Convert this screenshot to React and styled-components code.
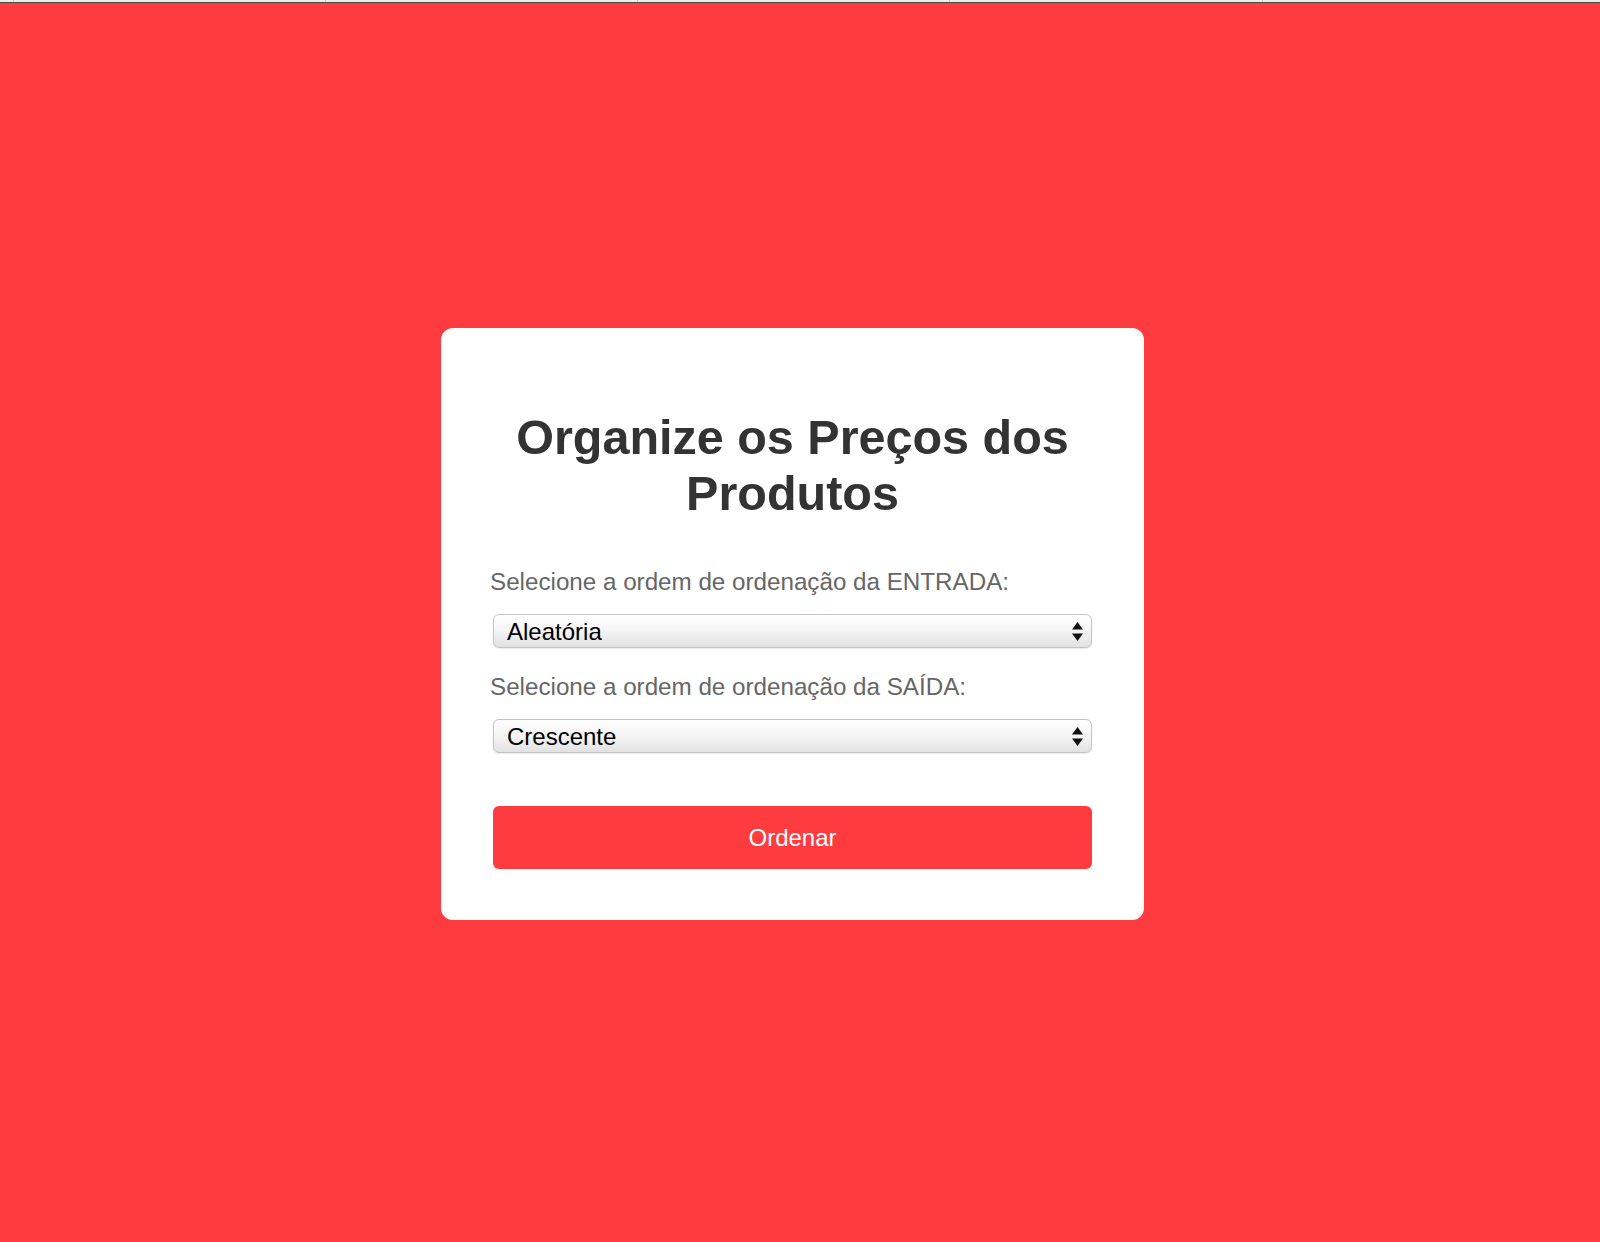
import React from "react";
import styled, { createGlobalStyle } from "styled-components";

const RED = "#fe3c40";

const Global = createGlobalStyle`
  html, body { margin: 0; padding: 0; }
  body {
    background: ${RED};
    font-family: "Liberation Sans", Arial, Helvetica, sans-serif;
  }
  * { box-sizing: border-box; }
`;

const TabStrip = styled.div`
  display: flex;
  height: 3px;
  background: #ececec;
  border-bottom: 1px solid #4a4a4a;
`;

const TabCell = styled.div`
  flex: 0 0 ${(p) => p.$w}px;
  border-left: ${(p) => (p.$first ? "none" : "1px solid #c9c9c9")};
`;

const Stage = styled.main`
  display: flex;
  justify-content: center;
  align-items: flex-start;
  min-height: 1239px;
  padding: 325px 15px 0 0;
`;

const Card = styled.section`
  width: 703px;
  background: #ffffff;
  border-radius: 12px;
  padding: 81px 48px 51px;
  display: flex;
  flex-direction: column;
`;

const Title = styled.h1`
  margin: 0 0 47px;
  font-size: 48.5px;
  line-height: 56px;
  font-weight: 700;
  color: #333333;
  text-align: center;
`;

const Label = styled.label`
  display: block;
  font-size: 24.2px;
  line-height: 28px;
  color: #666666;
  margin: 0 0 18px 1px;
`;

const SelectWrap = styled.div`
  position: relative;
  margin: 0 4px ${(p) => p.$mb}px 4px;
  height: 34px;
`;

const NativeSelect = styled.select`
  appearance: none;
  -webkit-appearance: none;
  width: 100%;
  height: 34px;
  margin: 0;
  padding: 0 40px 0 13px;
  border: 1px solid #c4c4c4;
  border-radius: 6px;
  background: linear-gradient(to bottom, #ffffff 0%, #f6f6f6 45%, #e2e2e2 100%);
  box-shadow: inset 0 1px 0 #ffffff, 0 1px 1px rgba(0, 0, 0, 0.08);
  font-family: "Liberation Sans", Arial, Helvetica, sans-serif;
  font-size: 24px;
  color: #000000;
  outline: none;
`;

const Arrows = styled.svg`
  position: absolute;
  right: 9px;
  top: 8px;
  width: 11px;
  height: 19px;
  pointer-events: none;
`;

const Button = styled.button`
  margin: 0 4px;
  height: 63px;
  border: none;
  border-radius: 6px;
  background: ${RED};
  color: #ffffff;
  font-family: "Liberation Sans", Arial, Helvetica, sans-serif;
  font-size: 24px;
  cursor: pointer;
`;

const Spacer = styled.div`
  height: ${(p) => p.$h}px;
`;

function SelectField({ id, label, options, value, mb }) {
  return (
    <>
      <Label htmlFor={id}>{label}</Label>
      <SelectWrap $mb={mb}>
        <NativeSelect id={id} defaultValue={value}>
          {options.map((o) => (
            <option key={o} value={o}>
              {o}
            </option>
          ))}
        </NativeSelect>
        <Arrows viewBox="0 0 11 19">
          <polygon points="5.5,0 11,7.5 0,7.5" fill="#111" />
          <polygon points="0,11.5 11,11.5 5.5,19" fill="#111" />
        </Arrows>
      </SelectWrap>
    </>
  );
}

export default function App() {
  const tabs = [13, 312, 312, 312, 313, 338];
  return (
    <>
      <Global />
      <TabStrip>
        {tabs.map((w, i) => (
          <TabCell key={i} $w={w} $first={i === 0} />
        ))}
      </TabStrip>
      <Stage>
        <Card>
          <Title>
            Organize os Preços dos
            <br />
            Produtos
          </Title>
          <SelectField
            id="entrada"
            label="Selecione a ordem de ordenação da ENTRADA:"
            options={["Aleatória", "Crescente", "Decrescente"]}
            value="Aleatória"
            mb={25}
          />
          <SelectField
            id="saida"
            label="Selecione a ordem de ordenação da SAÍDA:"
            options={["Crescente", "Decrescente"]}
            value="Crescente"
            mb={0}
          />
          <Spacer $h={53} />
          <Button type="button">Ordenar</Button>
        </Card>
      </Stage>
    </>
  );
}
